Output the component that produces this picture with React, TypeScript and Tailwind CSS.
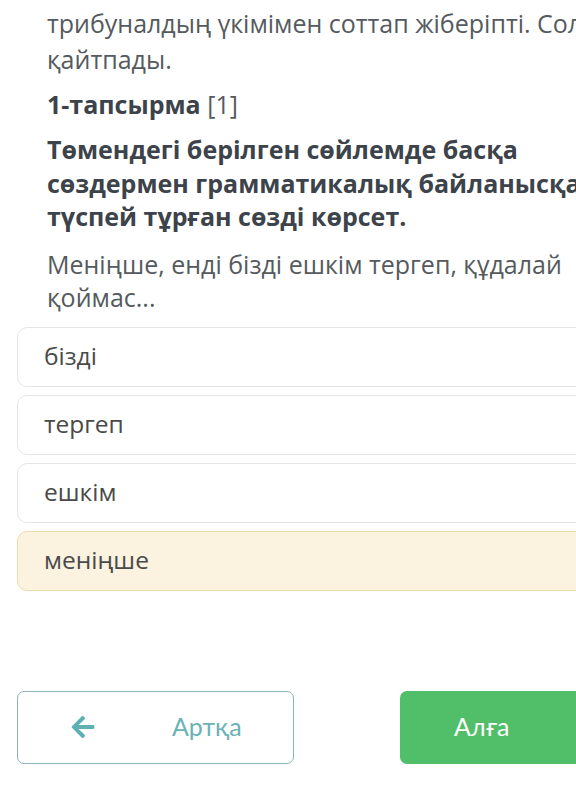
import React from "react";
import { FaArrowLeft } from "react-icons/fa";

const font = { fontFamily: '"Open Sans", "Noto Sans", sans-serif' };
const btnFont = { fontFamily: '"Lato", "Open Sans", sans-serif' };

function Option({ label, selected }: { label: string; selected?: boolean }) {
  return (
    <div
      className={
        "flex h-[60px] items-center rounded-[10px] border pl-[26px] text-[24.5px] text-[#4a4a4a] " +
        (selected ? "border-[#eddcab] bg-[#fbf2df]" : "border-[#e6e6e6] bg-white")
      }
    >
      {label}
    </div>
  );
}

export default function App() {
  return (
    <div className="h-[798px] w-[576px] overflow-hidden bg-white" style={font}>
      <div className="w-[700px]">
        <div className="pl-[47px] text-[25px] leading-[36px] text-[#555a5e]">
          <p className="-mt-[38px] mb-[7px] whitespace-nowrap">
            Бұрын соғыс уақытында әкесін әскери
          </p>
          <p className="whitespace-nowrap">трибуналдың үкімімен соттап жіберіпті. Сол кеткеннен</p>
          <p>қайтпады.</p>
          <p className="mt-[9px] text-[#3d434a]">
            <span className="font-bold">1-тапсырма</span>{" "}
            <span className="text-[#555a5e]">[1]</span>
          </p>
          <p className="mt-[11px] whitespace-nowrap text-[25px] font-bold leading-[33.5px] text-[#3d434a]">
            Төмендегі берілген сөйлемде басқа
            <br />
            сөздермен грамматикалық байланысқа
            <br />
            түспей тұрған сөзді көрсет.
          </p>
          <p className="mt-[14px] whitespace-nowrap leading-[33px]">
            Меніңше, енді бізді ешкім тергеп, құдалай
            <br />
            қоймас...
          </p>
        </div>
        <div className="ml-[17px] mt-[13px] flex flex-col gap-[8px]">
          <Option label="бізді" />
          <Option label="тергеп" />
          <Option label="ешкім" />
          <Option label="меніңше" selected />
        </div>
        <div className="ml-[17px] mt-[100px] flex gap-[106px]">
          <button className="flex h-[73px] w-[277px] items-center rounded-[7px] border border-[#8fb3b6] bg-white">
            <FaArrowLeft className="ml-[52px] text-[#5fb0b3]" size={26} />
            <span className="ml-[76px] text-[25px] text-[#6ab2b6]" style={btnFont}>
              Артқа
            </span>
          </button>
          <button className="flex h-[73px] w-[240px] items-center rounded-[7px] bg-[#51be69] pl-[54px]">
            <span className="text-[25px] text-white" style={btnFont}>
              Алға
            </span>
          </button>
        </div>
      </div>
    </div>
  );
}
